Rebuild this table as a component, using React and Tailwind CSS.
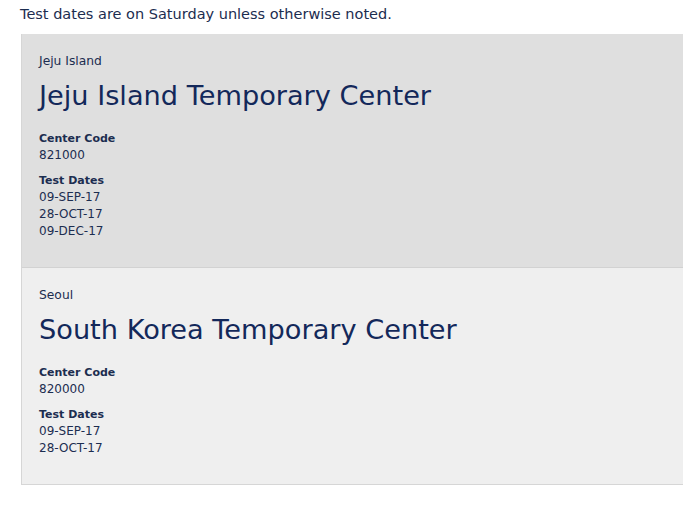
import React from "react";

const centers = [
  {
    city: "Jeju Island",
    name: "Jeju Island Temporary Center",
    code: "821000",
    dates: ["09-SEP-17", "28-OCT-17", "09-DEC-17"],
    bg: "bg-[#dfdfdf]",
  },
  {
    city: "Seoul",
    name: "South Korea Temporary Center",
    code: "820000",
    dates: ["09-SEP-17", "28-OCT-17"],
    bg: "bg-[#efefef]",
  },
];

const CenterCard = ({ center }) => (
  <div className={`${center.bg} pl-[17px] pt-[19px] pb-[27px]`}>
    <div className="text-[12.3px] leading-[17px]">{center.city}</div>
    <h2 className="mt-[9px] text-[27.2px] leading-[34px] text-[#13285a]">{center.name}</h2>
    <div className="mt-[17px] text-[11px] leading-[17px] font-bold">Center Code</div>
    <div className="text-[12px] leading-[17px]">{center.code}</div>
    <div className="mt-[8px] text-[11px] leading-[17px] font-bold">Test Dates</div>
    {center.dates.map((d) => (
      <div key={d} className="text-[12px] leading-[17px]">
        {d}
      </div>
    ))}
  </div>
);

export default function App() {
  return (
    <div
      className="min-h-[518px] bg-white overflow-hidden text-[#1c2d50]"
      style={{ fontFamily: '"DejaVu Sans", sans-serif' }}
    >
      <p className="pl-[20px] pt-[4px] text-[14.5px] leading-[20px]">
        Test dates are on Saturday unless otherwise noted.
      </p>
      <div className="ml-[21px] mt-[10px] w-[700px] border-l border-b border-[#d6d6d6]">
        {centers.map((c, i) => (
          <div key={c.code} className={i > 0 ? "border-t border-[#d2d2d2]" : ""}>
            <CenterCard center={c} />
          </div>
        ))}
      </div>
    </div>
  );
}
